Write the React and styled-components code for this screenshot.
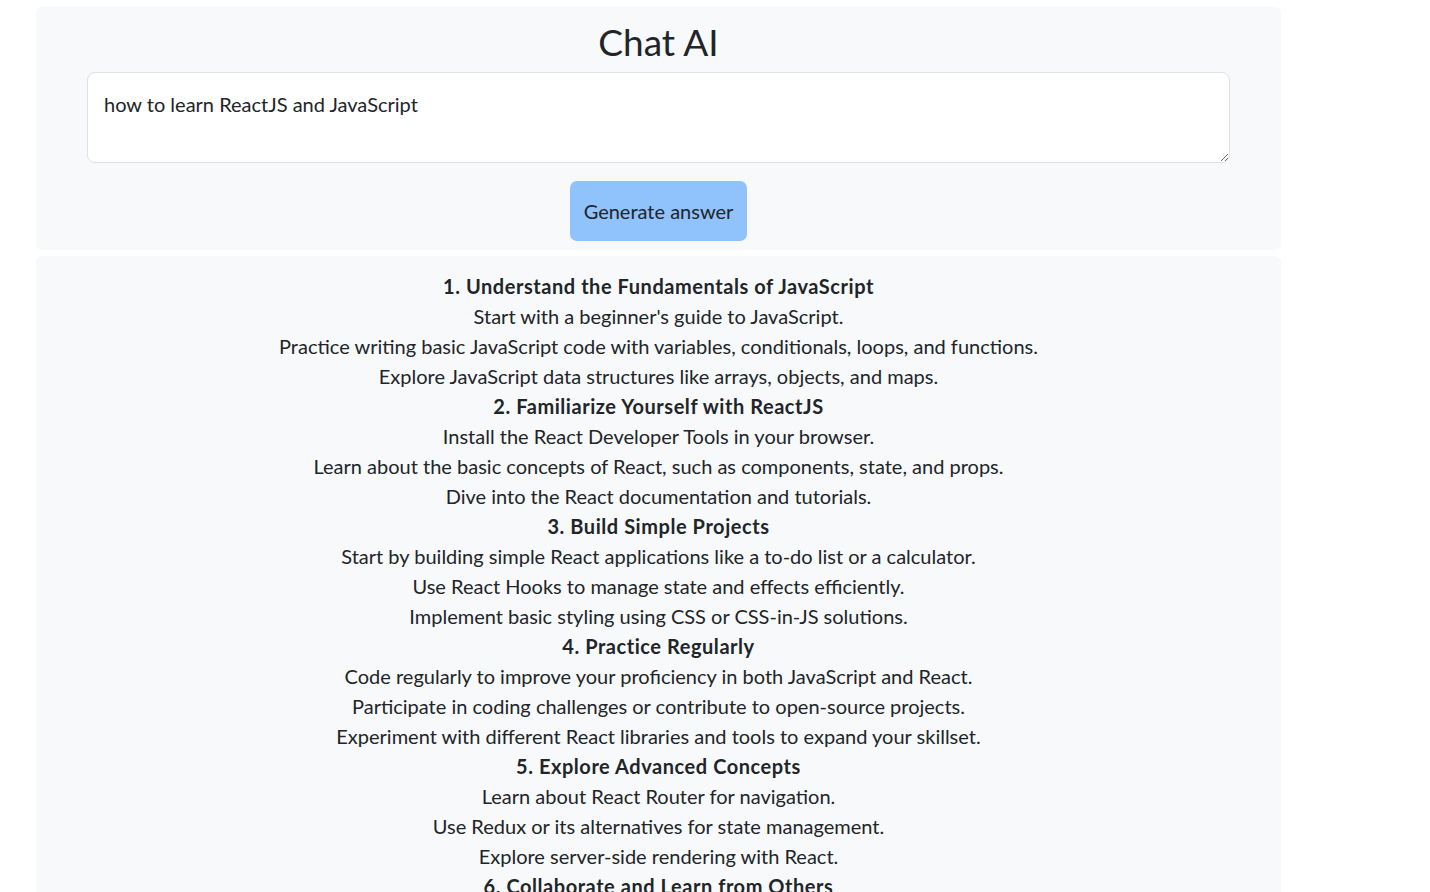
import React, { useState } from "react";
import styled, { createGlobalStyle } from "styled-components";

const GlobalStyle = createGlobalStyle`
  body {
    margin: 0;
    background: #fff;
    color: #212529;
    font-family: Lato, "Noto Sans", sans-serif;
  }
`;

const steps = [
  {
    title: "1. Understand the Fundamentals of JavaScript",
    items: [
      "Start with a beginner's guide to JavaScript.",
      "Practice writing basic JavaScript code with variables, conditionals, loops, and functions.",
      "Explore JavaScript data structures like arrays, objects, and maps.",
    ],
  },
  {
    title: "2. Familiarize Yourself with ReactJS",
    items: [
      "Install the React Developer Tools in your browser.",
      "Learn about the basic concepts of React, such as components, state, and props.",
      "Dive into the React documentation and tutorials.",
    ],
  },
  {
    title: "3. Build Simple Projects",
    items: [
      "Start by building simple React applications like a to-do list or a calculator.",
      "Use React Hooks to manage state and effects efficiently.",
      "Implement basic styling using CSS or CSS-in-JS solutions.",
    ],
  },
  {
    title: "4. Practice Regularly",
    items: [
      "Code regularly to improve your proficiency in both JavaScript and React.",
      "Participate in coding challenges or contribute to open-source projects.",
      "Experiment with different React libraries and tools to expand your skillset.",
    ],
  },
  {
    title: "5. Explore Advanced Concepts",
    items: [
      "Learn about React Router for navigation.",
      "Use Redux or its alternatives for state management.",
      "Explore server-side rendering with React.",
    ],
  },
  {
    title: "6. Collaborate and Learn from Others",
    items: [
      "Join online communities and forums to connect with other developers.",
      "Attend meetups and workshops to learn from experienced professionals.",
      "Review open-source React projects to see how others structure their code.",
    ],
  },
];

export default function App() {
  const [question, setQuestion] = useState("how to learn ReactJS and JavaScript");

  return (
    <Page>
      <GlobalStyle />
      <Panel>
        <Title>Chat AI</Title>
        <QuestionBox
          value={question}
          onChange={(e) => setQuestion(e.target.value)}
        />
        <GenerateButton>Generate answer</GenerateButton>
      </Panel>
      <AnswerPanel>
        {steps.map((step) => (
          <React.Fragment key={step.title}>
            <Heading>{step.title}</Heading>
            {step.items.map((item) => (
              <Line key={item}>{item}</Line>
            ))}
          </React.Fragment>
        ))}
      </AnswerPanel>
    </Page>
  );
}

const Page = styled.div`
    width: 1245px;
    margin-left: 36px;
    padding-top: 7px;
    display: flex;
    flex-direction: column;
    gap: 6px;
`

const Panel = styled.div`
    background-color: #f8f9fa;
    border-radius: 6px;
    padding: 11px 51px 9px;
    display: flex;
    flex-direction: column;
    align-items: center;
`

const Title = styled.h1`
    margin: 0 0 6px;
    font-size: 37px;
    line-height: 46px;
    padding-top: 1px;
    padding-bottom: 1px;
    font-weight: 400;
    color: #212529;
`

const QuestionBox = styled.textarea`
    box-sizing: border-box;
    width: 100%;
    height: 91px;
    padding: 16px;
    border: 1px solid #dee2e6;
    border-radius: 8px;
    background: #fff;
    font-family: inherit;
    font-size: 20px;
    line-height: 30px;
    color: #212529;
    resize: vertical;

    &:focus {
        outline: none;
    }
`

const GenerateButton = styled.button`
    margin-top: 18px;
    width: 177px;
    height: 60px;
    border: none;
    border-radius: 7px;
    background-color: #90c2fc;
    color: #212529;
    font-family: inherit;
    font-size: 20px;
    cursor: pointer;
`

const AnswerPanel = styled.div`
    background-color: #f8f9fa;
    border-radius: 6px;
    padding: 15px 24px;
    text-align: center;
    font-size: 20px;
    line-height: 30px;
`

const Heading = styled.div`
    font-weight: 700;
    letter-spacing: 0.55px;
`

const Line = styled.div`
    font-weight: 400;
`
